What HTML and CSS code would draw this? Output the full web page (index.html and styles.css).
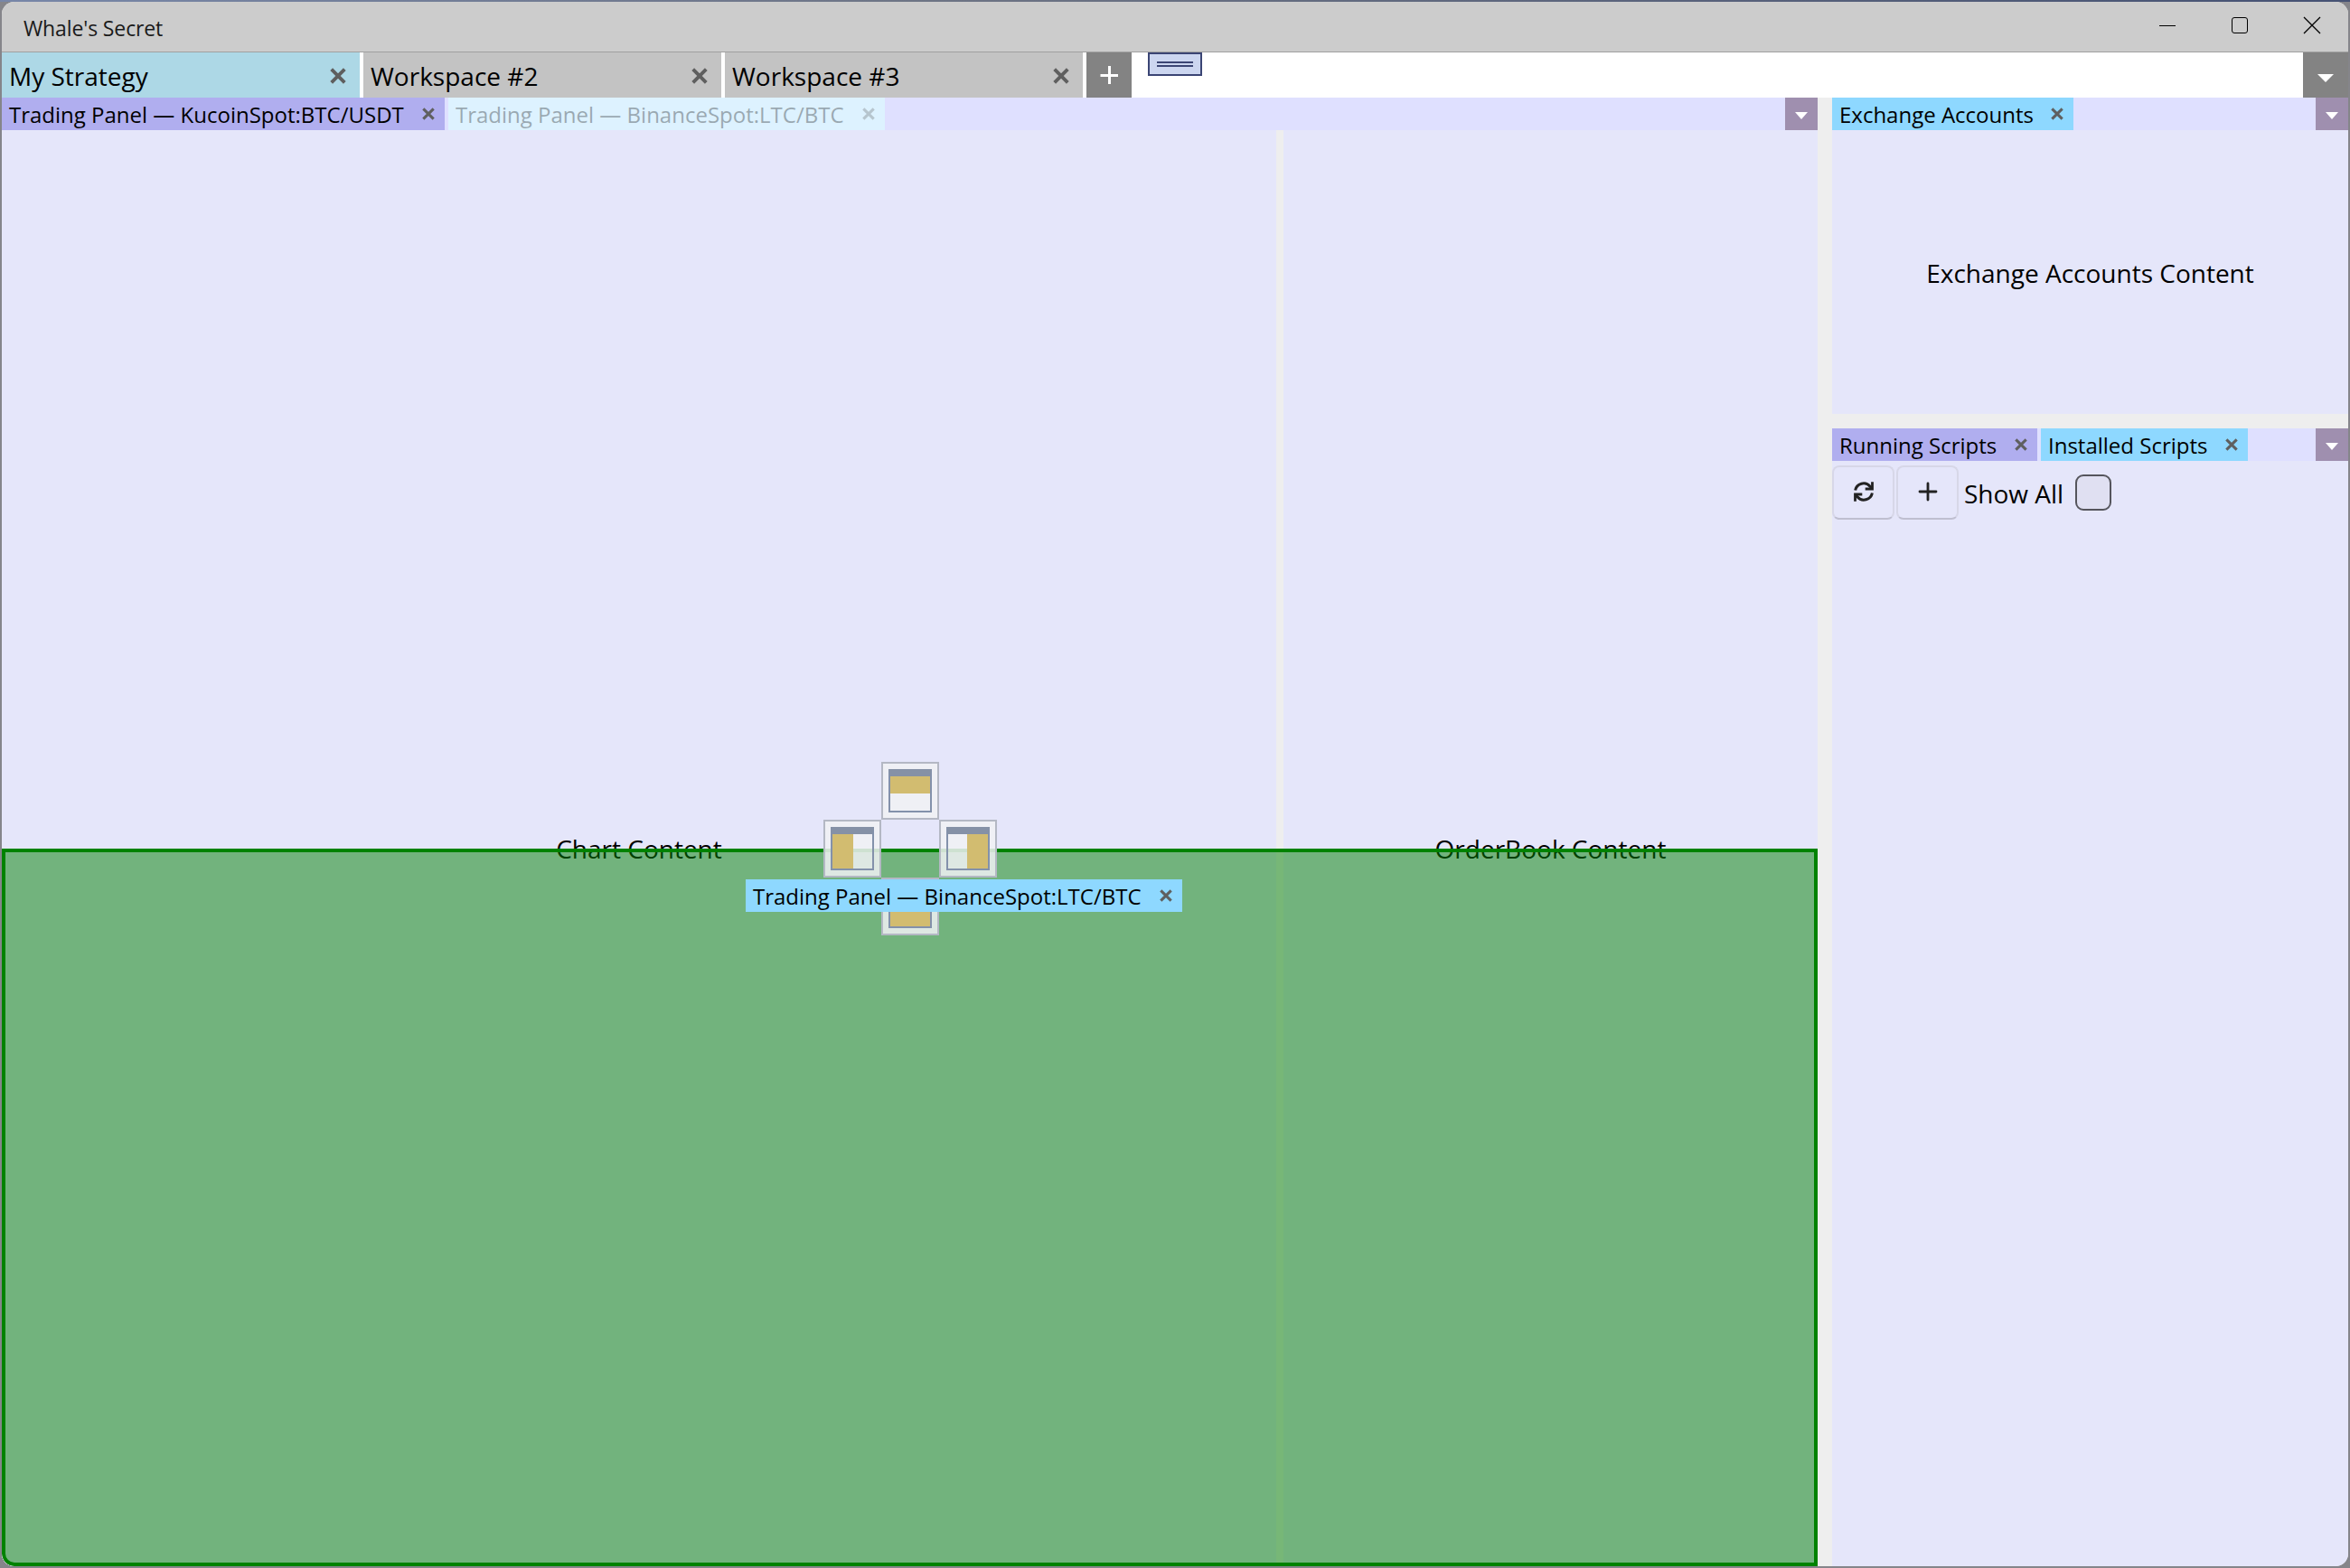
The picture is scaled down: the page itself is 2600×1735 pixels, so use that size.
FILE: index.html
```html
<!DOCTYPE html>
<html lang="en">
<head>
<meta charset="utf-8">
<title>Whale's Secret</title>
<link rel="stylesheet" href="styles.css">
</head>
<body>
<svg class="defs" width="0" height="0">
  <symbol id="close" viewBox="0 0 18 18"><path d="M1.7 1.7 16.3 16.3M16.3 1.7 1.7 16.3" stroke="#5f5f5f" stroke-width="3.9" fill="none"/></symbol>
  <symbol id="caret" viewBox="0 0 18 9"><path d="M0 0H18L9 9Z" fill="#fff"/></symbol>
</svg>
<div class="window">
  <header class="titlebar">
    <span class="title">Whale's Secret</span>
    <div class="controls">
      <svg width="20" height="20" viewBox="0 0 20 20"><path d="M1 10.5H19" stroke="#000"/></svg>
      <svg width="20" height="20" viewBox="0 0 20 20"><rect x="1.5" y="1.5" width="17" height="17" rx="2.5" fill="none" stroke="#000"/></svg>
      <svg width="20" height="20" viewBox="0 0 20 20"><path d="M1 1 19 19M19 1 1 19" stroke="#000" stroke-width="1.3"/></svg>
    </div>
  </header>
  <nav class="workspaces">
    <div class="ws active"><span>My Strategy</span><svg class="x"><use href="#close"/></svg></div>
    <div class="ws"><span>Workspace #2</span><svg class="x"><use href="#close"/></svg></div>
    <div class="ws"><span>Workspace #3</span><svg class="x"><use href="#close"/></svg></div>
    <button class="add"><svg width="20" height="20" viewBox="0 0 20 20"><path d="M10.5 0V20M.5 10.5H20" stroke="#fff" stroke-width="3"/></svg></button>
    <div class="handle"><i></i><i></i></div>
    <button class="more"><svg width="18" height="9"><use href="#caret"/></svg></button>
  </nav>
  <main class="dock">
    <section class="pane main-pane">
      <div class="tabs">
        <div class="tab selected kucoin"><span>Trading Panel — KucoinSpot:BTC/USDT</span><svg class="x"><use href="#close"/></svg></div>
        <div class="tab binance faded"><span>Trading Panel — BinanceSpot:LTC/BTC</span><svg class="x"><use href="#close"/></svg></div>
        <button class="menu"><svg width="14" height="8" viewBox="0 0 18 9" preserveAspectRatio="none"><path d="M0 0H18L9 9Z" fill="#fff"/></svg></button>
      </div>
      <div class="split">
        <div class="content chart">Chart Content</div>
        <div class="content book">OrderBook Content</div>
      </div>
      <div class="drop-zone"></div>
      <div class="compass">
        <div class="target top"><div class="glyph"><i></i></div></div>
        <div class="target left"><div class="glyph"><i></i></div></div>
        <div class="target right"><div class="glyph"><i></i></div></div>
        <div class="target bottom"><div class="glyph"><i></i></div></div>
      </div>
      <div class="tab binance dragged"><span>Trading Panel — BinanceSpot:LTC/BTC</span><svg class="x"><use href="#close"/></svg></div>
    </section>
    <aside class="side">
      <section class="pane accounts">
        <div class="tabs">
          <div class="tab exchange"><span>Exchange Accounts</span><svg class="x"><use href="#close"/></svg></div>
          <button class="menu"><svg width="14" height="8" viewBox="0 0 18 9" preserveAspectRatio="none"><path d="M0 0H18L9 9Z" fill="#fff"/></svg></button>
        </div>
        <div class="content">Exchange Accounts Content</div>
      </section>
      <section class="pane scripts">
        <div class="tabs">
          <div class="tab selected running"><span>Running Scripts</span><svg class="x"><use href="#close"/></svg></div>
          <div class="tab installed"><span>Installed Scripts</span><svg class="x"><use href="#close"/></svg></div>
          <button class="menu"><svg width="14" height="8" viewBox="0 0 18 9" preserveAspectRatio="none"><path d="M0 0H18L9 9Z" fill="#fff"/></svg></button>
        </div>
        <div class="toolbar">
          <button class="tool"><svg width="24" height="24" viewBox="0 0 24 24" fill="none" stroke="#222" stroke-width="3"><path d="M2.6 10.5A9.4 9.4 0 0 1 19 6.2L21 8.5"/><path d="M21.4 13.5A9.4 9.4 0 0 1 5 17.8L3 15.5"/><path d="M21.5 1.2V9H13.7" stroke-width="2.8"/><path d="M2.5 22.8V15H10.3" stroke-width="2.8"/></svg></button>
          <button class="tool"><svg width="22" height="22" viewBox="0 0 22 22"><path d="M11 2V20M2 11H20" stroke="#222" stroke-width="2.8" stroke-linecap="round"/></svg></button>
          <label class="show-all"><span>Show All</span><span class="check"></span></label>
        </div>
      </section>
    </aside>
  </main>
</div>
</body>
</html>
```
FILE: styles.css
```css
* { box-sizing: border-box; }
body {
  margin: 0;
  width: 2600px;
  height: 1735px;
  padding: 2px;
  overflow: hidden;
  background: linear-gradient(90deg, #7786a8, #6d7484 40%, #465274) 0 0 / 100% 2px no-repeat, #85858a;
  font-family: "Open Sans", "Noto Sans", sans-serif;
  color: #000;
}
button { border: 0; padding: 0; margin: 0; display: flex; align-items: center; justify-content: center; }
svg { display: block; flex: none; }
.defs { position: absolute; }
.window {
  width: 2596px;
  height: 1731px;
  display: flex;
  flex-direction: column;
  border-radius: 14px;
  overflow: hidden;
  background: #eee;
}
.titlebar {
  height: 56px;
  flex: none;
  display: flex;
  justify-content: space-between;
  background: #ccc;
  border-bottom: 1px solid #a0a0a0;
}
.title { padding: 13px 0 0 24px; font-size: 23px; line-height: 32px; letter-spacing: -0.12px; color: #1a1a1a; }
.controls { display: flex; gap: 60px; padding: 16px 30px 0 0; }
.workspaces { height: 50px; flex: none; display: flex; gap: 4px; background: #fff; }
.ws {
  width: 396px;
  padding: 0 15px 0 8px;
  display: flex;
  align-items: center;
  justify-content: space-between;
  background: #c3c3c3;
  font-size: 28px;
  line-height: 50px;
  white-space: nowrap;
}
.ws span { padding-top: 2px; }
.ws.active { background: #add8e6; }
.ws .x { width: 18px; height: 18px; margin-top: 2px; }
.add, .more { width: 50px; height: 50px; background: #838383; }
.more { margin-left: auto; padding-top: 7px; }
.handle {
  width: 60px;
  height: 26px;
  margin-left: 14px;
  padding: 8px;
  display: flex;
  flex-direction: column;
  gap: 2px;
  border: 2px solid #3b4574;
  background: #ccd6f0;
}
.handle i { height: 2px; flex: none; background: #3b4574; }
.dock { flex: 1; display: flex; gap: 16px; }
.pane { display: flex; flex-direction: column; background: #e5e6fa; }
.main-pane { width: 2009px; position: relative; }
.side { width: 571px; display: flex; flex-direction: column; gap: 16px; }
.accounts { height: 350px; }
.scripts { flex: 1; }
.tabs { height: 36px; flex: none; display: flex; gap: 4px; background: #dfe0ff; }
.tab {
  height: 36px;
  padding: 0 11px 0 8px;
  display: flex;
  align-items: center;
  justify-content: space-between;
  background: #8ed8ff;
  font-size: 24px;
  line-height: 36px;
  white-space: nowrap;
}
.tab span { padding-top: 2px; }
.tab .x { width: 14px; height: 14px; margin-bottom: 1px; }
.tab.selected { background: #b0aeef; }
.kucoin { width: 490px; }
.binance { width: 483px; }
.exchange { width: 267px; }
.running { width: 227px; }
.installed { width: 229px; }
.faded { background: #ddf2ff; }
.faded span, .faded .x { opacity: .3; }
.menu { width: 36px; height: 36px; margin-left: auto; padding-top: 4px; background: #9f8faf; }
.split { flex: 1; display: flex; gap: 8px; background: #eee; }
.content {
  flex: 1;
  display: flex;
  align-items: center;
  justify-content: center;
  background: #e5e6fa;
  font-size: 28px;
}
.accounts .content { padding-top: 2px; }
.content.chart { flex: 0 0 1410px; }
.drop-zone {
  position: absolute;
  inset: 831px 0 0 0;
  border: 4px solid #008200;
  border-bottom-left-radius: 14px;
  background: rgba(0, 128, 0, .5);
}
.compass {
  position: absolute;
  left: 909px;
  top: 735px;
  display: grid;
  grid-template: repeat(3, 64px) / repeat(3, 64px);
  grid-template-areas: ". t ." "l . r" ". b .";
}
.target { padding: 6px; border: 2px solid #b4b8c4; background: rgba(240, 241, 243, .86); }
.target.top { grid-area: t; }
.target.left { grid-area: l; }
.target.right { grid-area: r; }
.target.bottom { grid-area: b; }
.glyph {
  width: 48px;
  height: 48px;
  display: flex;
  border: 2px solid #8391ab;
  border-top: 8px solid #8591a6;
}
.glyph i { width: 100%; height: 100%; background: #d2bc70; }
.top i { height: 19px; }
.bottom i { height: 19px; margin-top: auto; }
.left i { width: 23px; }
.right i { width: 23px; margin-left: auto; }
.dragged { position: absolute; left: 823px; top: 865px; }
.toolbar { display: flex; gap: 2px; padding: 5px 0; }
.tool {
  width: 69px;
  height: 60px;
  border: 2px solid #d7d7e8;
  border-bottom-color: #bfbfd0;
  border-radius: 8px;
  background: #e5e6fa;
  padding-bottom: 2px;
}
.show-all { display: flex; align-items: center; gap: 13px; padding-left: 4px; font-size: 28px; }
.show-all span:first-child { padding-top: 2px; }
.check { width: 40px; height: 40px; border: 2px solid #55555c; border-radius: 9px; background: #e0e0f2; }
```
